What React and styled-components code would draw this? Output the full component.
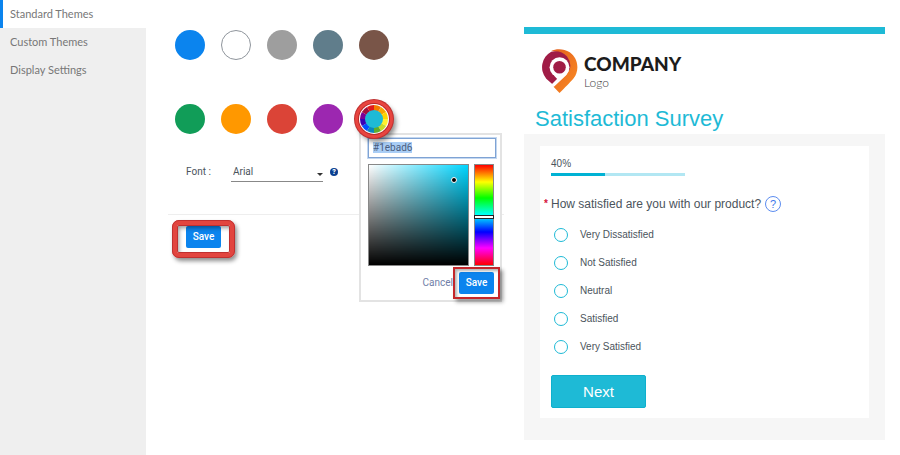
import React, { useEffect, useRef, useState } from 'react'
import styled, { createGlobalStyle, css } from 'styled-components'

const colors = {
  primary: '#0b84ee',
  theme: '#1ebad6',
  themeLight: '#b2e7f3',
  text: '#4b545c',
  muted: '#777',
}

const uiFont = 'Roboto, sans-serif'
const brandFont = 'Lato, sans-serif'
const surveyFont = "'Liberation Sans', Arial, sans-serif"

const swatches = [
  { name: 'Blue', color: '#0b84ee' },
  { name: 'White', color: '#fff', outlined: true },
  { name: 'Grey', color: '#9e9e9e' },
  { name: 'Slate', color: '#607d8b' },
  { name: 'Brown', color: '#795548' },
  { name: 'Green', color: '#119d58' },
  { name: 'Orange', color: '#ff9800' },
  { name: 'Red', color: '#db4437' },
  { name: 'Purple', color: '#9c27b0' },
]

const options = [
  'Very Dissatisfied',
  'Not Satisfied',
  'Neutral',
  'Satisfied',
  'Very Satisfied',
]

const GlobalStyle = createGlobalStyle`
  *, *::before, *::after {
    box-sizing: border-box;
  }
  body {
    margin: 0;
    background: #fff;
  }
  button, input, select {
    font: inherit;
    color: inherit;
  }
`

const Page = styled.div`
  display: flex;
  min-height: 100vh;
  font-family: ${uiFont};
  font-size: 10px;
  line-height: 14px;
  color: ${colors.text};
`

const Sidebar = styled.nav`
  flex: 0 0 146px;
  background: #efefef;
`

const SidebarLink = styled.a`
  display: flex;
  align-items: center;
  height: 28px;
  padding-left: 10px;
  font-family: ${brandFont};
  font-size: 11px;
  color: ${colors.muted};
  text-decoration: none;
  ${({ $active }) =>
    $active &&
    css`
      padding-left: 7px;
      border-left: 3px solid ${colors.primary};
      background: #fff;
    `}
`

const Settings = styled.main`
  flex: 0 0 378px;
  padding: 30px 20px 0 22px;
`

const SwatchGrid = styled.div`
  display: grid;
  grid-template-columns: repeat(5, 30px);
  gap: 44px 16px;
  padding-left: 7px;
`

const Swatch = styled.button`
  width: 30px;
  height: 30px;
  padding: 0;
  border: ${({ $outlined }) => ($outlined ? '1px solid #8f959c' : '0')};
  border-radius: 50%;
  background: ${({ $color }) => $color};
`

const PickerAnchor = styled.div`
  position: relative;
  width: 30px;
  height: 30px;
`

const WheelButton = styled.button`
  position: relative;
  z-index: 2;
  display: block;
  width: 30px;
  height: 30px;
  padding: 0;
  border: 0;
  border-radius: 50%;
  background: #fff;
  box-shadow:
    0 0 0 1px #b92b2b,
    0 0 0 4px #e8453f,
    0 0 0 5px #bf3030,
    3px 4px 5px 4px rgba(0, 0, 0, 0.45);

  svg {
    display: block;
  }
`

const Popover = styled.form`
  position: absolute;
  top: 29px;
  left: 0;
  z-index: 1;
  width: 143px;
  padding: 3px 6px 6px 7px;
  border: 2px solid #e3e3e3;
  background: #fff;
`

const HexInput = styled.input`
  display: block;
  width: 128px;
  height: 20px;
  padding: 0 4px 2px;
  border: 1px solid #7fa3d4;
  outline: 1px solid #c3d7f0;
  outline-offset: 0;
  font-size: 10px;

  &::selection {
    background: #a9cdf5;
    color: #4b5e80;
  }
`

const PickerBody = styled.div`
  display: flex;
  gap: 5px;
  margin-top: 6px;
`

const ShadeArea = styled.div`
  position: relative;
  width: 102px;
  height: 102px;
  border: 1px solid #888;
  background:
    linear-gradient(to top, #000, transparent),
    linear-gradient(to right, #fff, #00d5ff);
`

const ShadeHandle = styled.span`
  position: absolute;
  top: 12px;
  left: 82px;
  width: 6px;
  height: 6px;
  border: 1px solid #fff;
  border-radius: 50%;
  background: #000;
`

const HueBar = styled.div`
  position: relative;
  width: 20px;
  height: 102px;
  border: 1px solid #888;
  background: linear-gradient(
    #f00,
    #ff0 17%,
    #0f0 33%,
    #0ff 50%,
    #00f 67%,
    #f0f 83%,
    #f00
  );
`

const HueHandle = styled.span`
  position: absolute;
  top: 50px;
  left: -1px;
  right: -1px;
  height: 4px;
  border: 1px solid #222;
  background: #fff;
`

const PickerActions = styled.div`
  display: flex;
  justify-content: flex-end;
  align-items: center;
  gap: 6px;
  margin-top: 6px;
`

const CancelButton = styled.button`
  padding: 0;
  border: 0;
  background: none;
  color: #7080a8;
`

const Highlight = styled.div`
  position: relative;
  width: fit-content;

  &::after {
    content: '';
    position: absolute;
    pointer-events: none;
    ${({ $round }) =>
      $round
        ? css`
            inset: -6px -14px -10px;
            border: 5px solid #e2453f;
            border-radius: 7px;
            outline: 1px solid #bf3030;
            outline-offset: -1px;
            box-shadow:
              2px 3px 4px rgba(0, 0, 0, 0.45),
              inset 0 0 0 1px #bf3030,
              inset 2px 3px 4px rgba(0, 0, 0, 0.4);
          `
        : css`
            inset: -5px -6px;
            border: 2px solid #c4262a;
            box-shadow:
              3px 3px 4px rgba(0, 0, 0, 0.4),
              inset 2px 2px 3px rgba(0, 0, 0, 0.3);
          `}
  }
`

const SaveButton = styled.button`
  display: block;
  width: 35px;
  height: 22px;
  padding: 0;
  border: 0;
  border-radius: 2px;
  background: ${colors.primary};
  font-weight: 500;
  color: #fff;
`

const FontRow = styled.div`
  display: flex;
  align-items: center;
  margin-top: 28px;
  padding-left: 18px;
`

const FontLabel = styled.label`
  width: 45px;
`

const SelectWrap = styled.div`
  position: relative;
  width: 92px;

  &::after {
    content: '';
    position: absolute;
    top: 11px;
    right: 0;
    border: 3px solid transparent;
    border-top-color: #333;
    border-bottom: 0;
    pointer-events: none;
  }
`

const FontSelect = styled.select`
  display: block;
  width: 100%;
  height: 20px;
  padding: 0 2px;
  border: 0;
  border-bottom: 1px solid #888;
  border-radius: 0;
  background: none;
  appearance: none;
`

const HelpBadge = styled.button`
  width: 8px;
  height: 8px;
  margin-left: 7px;
  padding: 0;
  border: 0;
  border-radius: 50%;
  background: #0b3f91;
  font-size: 7px;
  font-weight: 900;
  line-height: 8px;
  color: #fff;
`

const SaveRow = styled.div`
  margin-top: 32px;
  padding: 11px 0 0 18px;
  border-top: 1px solid #eee;
`

const Preview = styled.section`
  flex: 1 1 0;
  min-width: 0;
  padding: 27px 15px 14px 0;
  font-family: ${surveyFont};
`

const PreviewHeader = styled.header`
  padding: 15px 11px 0;
  border-top: 7px solid ${colors.theme};
`

const Brand = styled.div`
  display: flex;
  align-items: center;
  gap: 6px;
  padding-left: 6px;
  font-family: ${brandFont};
`

const BrandText = styled.div`
  display: flex;
  flex-direction: column;
`

const BrandName = styled.span`
  font-size: 19px;
  font-weight: 900;
  line-height: 24px;
  color: #1c1c1c;
`

const BrandSub = styled.span`
  font-size: 12px;
  font-weight: 300;
  line-height: 14px;
  color: #444;
`

const SurveyTitle = styled.h1`
  margin: 12px 0 2px;
  font-size: 22px;
  font-weight: 400;
  line-height: 27px;
  color: ${colors.theme};
`

const SurveyBody = styled.div`
  padding: 12px 16px 22px;
  background: #f6f6f6;
`

const SurveyCard = styled.form`
  padding: 11px 11px 10px;
  background: #fff;
`

const ProgressLabel = styled.div`
  font-size: 10px;
`

const ProgressTrack = styled.div`
  width: 134px;
  height: 3px;
  margin-top: 2px;
  background: ${colors.themeLight};
`

const ProgressFill = styled.div`
  height: 100%;
  background: #00b2d4;
`

const Question = styled.fieldset`
  margin: 20px 0 0;
  padding: 0;
  border: 0;
`

const Legend = styled.legend`
  display: flex;
  align-items: center;
  margin-left: -7px;
  padding: 0;
  font-size: 12px;
  line-height: 16px;
`

const Required = styled.span`
  width: 7px;
  font-size: 10px;
  font-weight: 700;
  color: #d5133a;
`

const HintButton = styled.button`
  width: 16px;
  height: 16px;
  margin-left: 4px;
  padding: 0;
  border: 1px solid #5c8df0;
  border-radius: 50%;
  background: none;
  font-size: 11px;
  line-height: 14px;
  color: #3f78ea;
`

const OptionList = styled.div`
  display: flex;
  flex-direction: column;
  gap: 14px;
  padding: 16px 0 0 3px;
`

const Option = styled.label`
  display: flex;
  align-items: center;
  gap: 12px;
  font-size: 10px;
`

const Radio = styled.input`
  width: 14px;
  height: 14px;
  margin: 0;
  border: 1px solid ${colors.theme};
  border-radius: 50%;
  background: #fff;
  appearance: none;

  &:checked {
    border-width: 4px;
  }
`

const NextButton = styled.button`
  display: block;
  width: 95px;
  height: 33px;
  margin-top: 21px;
  border: 1px solid #0fb0cd;
  border-radius: 2px;
  background: ${colors.theme};
  font-size: 15px;
  color: #fff;
`

//Roue de couleurs : douze secteurs autour d'un disque de la couleur choisie.
const wheelColors = [
  '#f47b00',
  '#f9a600',
  '#ffd500',
  '#fff22d',
  '#c8dc28',
  '#5fae2c',
  '#0a86bd',
  '#0050ff',
  '#3a00b5',
  '#7a0096',
  '#a30f3c',
  '#e01b1b',
]

function ColorWheel({ color }) {
  const point = (i) => {
    const angle = ((i * 30 - 90) * Math.PI) / 180
    return `${15 + 14 * Math.cos(angle)} ${15 + 14 * Math.sin(angle)}`
  }
  return (
    <svg width="30" height="30" viewBox="0 0 30 30" aria-hidden="true">
      {wheelColors.map((fill, i) => (
        <path
          key={fill}
          fill={fill}
          d={`M15 15L${point(i)}A14 14 0 0 1 ${point(i + 1)}Z`}
        />
      ))}
      <circle cx="15" cy="15" r="9" fill={color} />
    </svg>
  )
}

function CompanyLogo() {
  return (
    <svg width="37" height="44" viewBox="0 0 110 133" aria-hidden="true">
      <defs>
        <linearGradient id="logoOrange" x1="0" y1="0" x2="1" y2="1">
          <stop offset="0" stopColor="#e2601f" />
          <stop offset="1" stopColor="#fb8c23" />
        </linearGradient>
      </defs>
      <path
        fill="url(#logoOrange)"
        d="M30 6C45-2 68-2 86 10C106 24 114 50 106 73C102 86 92 96 55 133L37 114L75 78Q90 62 85 40Q76 10 30 6Z"
      />
      <path
        fill="#a01c46"
        d="M33 106L15 90A54 54 0 0 1 30 8Q60 3 78 23Q92 42 86 62L70 80L55 84L48 91Z"
      />
      <circle cx="55" cy="55" r="30" fill="#fff" />
      <path d="M33 106L48 91L38 80L55 70L85 60L75 79L38 114Z" fill="#fff" />
      <circle cx="55" cy="55" r="19" fill="#a01c46" />
    </svg>
  )
}

function ColorPicker() {
  const [hex, setHex] = useState('#1ebad6')
  const inputRef = useRef(null)

  //La valeur est sélectionnée dès l'ouverture.
  useEffect(() => {
    inputRef.current.focus()
    inputRef.current.select()
  }, [])

  return (
    <PickerAnchor>
      <WheelButton type="button" aria-label="Custom color">
        <ColorWheel color={colors.theme} />
      </WheelButton>
      <Popover onSubmit={(e) => e.preventDefault()}>
        <HexInput
          ref={inputRef}
          aria-label="Hex color"
          spellCheck={false}
          value={hex}
          onChange={(e) => setHex(e.target.value)}
        />
        <PickerBody>
          <ShadeArea>
            <ShadeHandle />
          </ShadeArea>
          <HueBar>
            <HueHandle />
          </HueBar>
        </PickerBody>
        <PickerActions>
          <CancelButton type="button">Cancel</CancelButton>
          <Highlight>
            <SaveButton type="submit">Save</SaveButton>
          </Highlight>
        </PickerActions>
      </Popover>
    </PickerAnchor>
  )
}

function SurveyPreview() {
  const [answer, setAnswer] = useState('')
  const progress = 40

  return (
    <Preview>
      <PreviewHeader>
        <Brand>
          <CompanyLogo />
          <BrandText>
            <BrandName>COMPANY</BrandName>
            <BrandSub>Logo</BrandSub>
          </BrandText>
        </Brand>
        <SurveyTitle>Satisfaction Survey</SurveyTitle>
      </PreviewHeader>
      <SurveyBody>
        <SurveyCard onSubmit={(e) => e.preventDefault()}>
          <ProgressLabel>{progress}%</ProgressLabel>
          <ProgressTrack>
            <ProgressFill style={{ width: `${progress}%` }} />
          </ProgressTrack>
          <Question>
            <Legend>
              <Required>*</Required>
              How satisfied are you with our product?
              <HintButton type="button">?</HintButton>
            </Legend>
            <OptionList>
              {options.map((option) => (
                <Option key={option}>
                  <Radio
                    type="radio"
                    name="satisfaction"
                    checked={answer === option}
                    onChange={() => setAnswer(option)}
                  />
                  {option}
                </Option>
              ))}
            </OptionList>
          </Question>
          <NextButton type="submit">Next</NextButton>
        </SurveyCard>
      </SurveyBody>
    </Preview>
  )
}

function App() {
  return (
    <>
      <GlobalStyle />
      <Page>
        <Sidebar>
          <SidebarLink href="#standard" $active>
            Standard Themes
          </SidebarLink>
          <SidebarLink href="#custom">Custom Themes</SidebarLink>
          <SidebarLink href="#display">Display Settings</SidebarLink>
        </Sidebar>
        <Settings>
          <SwatchGrid>
            {swatches.map((swatch) => (
              <Swatch
                key={swatch.name}
                type="button"
                aria-label={swatch.name}
                $color={swatch.color}
                $outlined={swatch.outlined}
              />
            ))}
            <ColorPicker />
          </SwatchGrid>
          <FontRow>
            <FontLabel htmlFor="font">Font :</FontLabel>
            <SelectWrap>
              <FontSelect id="font" defaultValue="Arial">
                <option>Arial</option>
              </FontSelect>
            </SelectWrap>
            <HelpBadge type="button">?</HelpBadge>
          </FontRow>
          <SaveRow>
            <Highlight $round>
              <SaveButton type="button">Save</SaveButton>
            </Highlight>
          </SaveRow>
        </Settings>
        <SurveyPreview />
      </Page>
    </>
  )
}

export default App
